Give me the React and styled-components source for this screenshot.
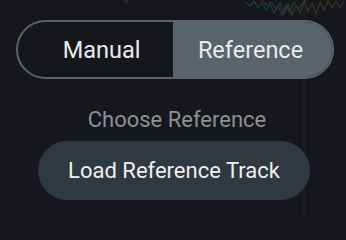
import styled, { createGlobalStyle } from 'styled-components';

const GlobalStyle = createGlobalStyle`
  html, body {
    margin: 0;
    padding: 0;
    background: #15171c;
  }
  body {
    font-family: Roboto, "Liberation Sans", sans-serif;
    -webkit-font-smoothing: antialiased;
  }
`;

const Screen = styled.div`
  width: 346px;
  height: 220px;
  overflow: hidden;
  display: flex;
  flex-direction: column;
  background:
    linear-gradient(#1a1d22, #1a1d22) 303px 0 / 2px 100% no-repeat,
    #15171c;
`;

const Wave = styled.svg`
  display: block;
  width: 346px;
  height: 20px;
  flex-shrink: 0;
`;

const Toggle = styled.div`
  margin-left: 16px;
  width: 318px;
  height: 59px;
  box-sizing: border-box;
  border: 2px solid #59646c;
  border-radius: 30px;
  overflow: hidden;
  display: flex;
  background: #15171c;
`;

const Segment = styled.button`
  width: ${(p) => (p.$active ? '160px' : '156px')};
  border: none;
  margin: 0;
  font-family: inherit;
  font-size: 23.5px;
  font-weight: 400;
  color: #e9ebec;
  background: ${(p) => (p.$active ? '#58636b' : 'transparent')};
  padding: ${(p) => (p.$active ? '1px 4px 0 0' : '1px 0 0 12px')};
`;

const Panel = styled.div`
  display: flex;
  flex-direction: column;
  align-items: center;
  margin-top: 28px;
`;

const Caption = styled.div`
  font-size: 22px;
  color: #8a9197;
  margin-left: 8px;
  line-height: 26px;
`;

const LoadButton = styled.button`
  margin-top: 8px;
  margin-left: 2px;
  width: 272px;
  height: 59px;
  border: none;
  border-radius: 30px;
  background: #2e3941;
  color: #eef0f0;
  font-family: inherit;
  font-size: 22px;
  padding: 0;
`;

export default function App() {
  return (
    <>
      <GlobalStyle />
      <Screen>
        <Wave viewBox="0 0 346 20">
          <polyline
            points="245,2 250,6 254,1 258,8 262,3 266,10 270,4 274,13 278,6 282,15 286,5 290,12 294,2 298,9 302,4 306,0"
            fill="none"
            stroke="#1b3f4a"
            strokeWidth="1.2"
          />
          <polyline
            points="262,0 266,5 271,2 276,9 280,3 284,14 288,4 292,15 296,6 300,13 304,1 308,11 312,3 316,14 320,2 324,10 328,1 332,8 336,2 340,7 344,1"
            fill="none"
            stroke="#40341f"
            strokeWidth="1.2"
          />
          <polyline points="124,0 126,3 128,0" fill="none" stroke="#3d2f1e" strokeWidth="1.4" />
        </Wave>
        <Toggle>
          <Segment>Manual</Segment>
          <Segment $active>Reference</Segment>
        </Toggle>
        <Panel>
          <Caption>Choose Reference</Caption>
          <LoadButton>Load Reference Track</LoadButton>
        </Panel>
      </Screen>
    </>
  );
}
